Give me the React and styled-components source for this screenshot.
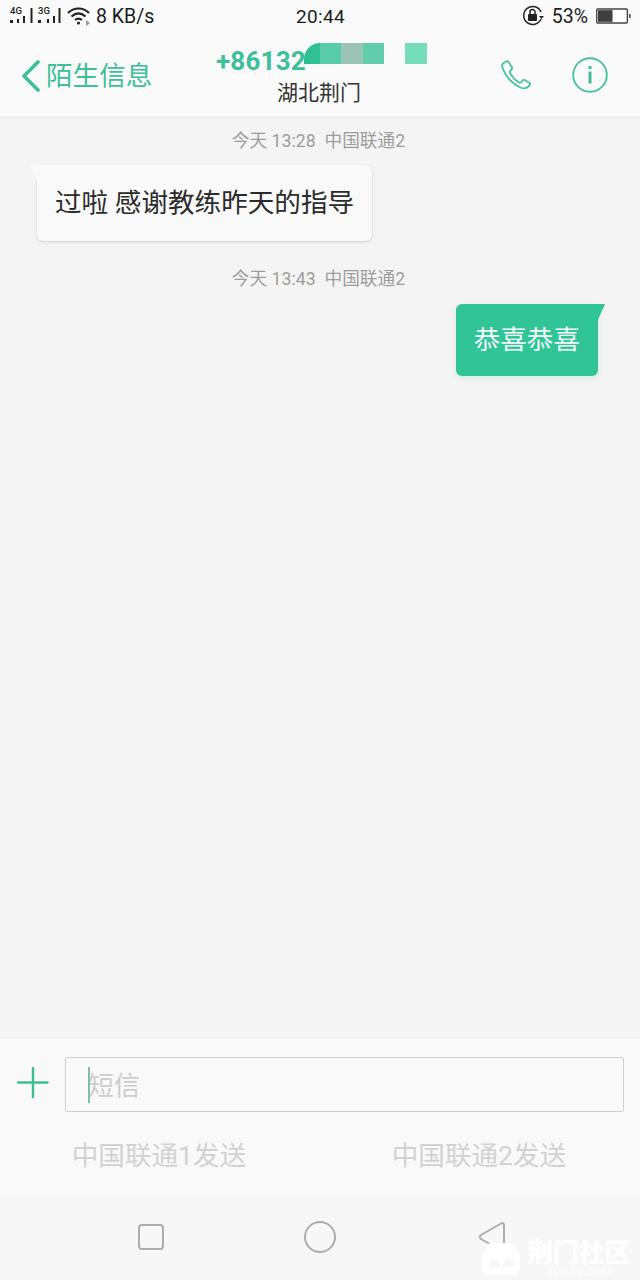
import React from "react";
import styled, { createGlobalStyle } from "styled-components";

const FONT = `Roboto, "Noto Sans CJK SC", "Noto Sans", sans-serif`;
const GREEN = "#30c496";
const INK_GREEN = "#3dbf98";

const Global = createGlobalStyle`
  html, body { margin: 0; padding: 0; }
  body { font-family: ${FONT}; background: #f4f4f4; }
  * { box-sizing: border-box; }
`;

const Page = styled.div`
  width: 640px;
  height: 1280px;
  display: flex;
  flex-direction: column;
  position: relative;
  overflow: hidden;
  background: #f4f4f4;
`;

const Header = styled.header`
  height: 118px;
  flex: none;
  background: #fafafa;
  border-bottom: 2px solid #efefef;
  display: flex;
  flex-direction: column;
`;

const StatusBar = styled.div`
  height: 32px;
  flex: none;
  padding: 0 9px 0 10px;
  display: grid;
  grid-template-columns: 1fr auto 1fr;
  align-items: center;
  color: #1c1c1c;
  font-size: 19.5px;
`;

const StatusLeft = styled.div`
  display: flex;
  align-items: center;
  gap: 5px;
`;

const WifiSlot = styled.span`
  display: flex;
  margin-left: 1px;
`;

const StatusRight = styled.div`
  display: flex;
  align-items: center;
  justify-content: flex-end;
  gap: 8px;
`;

const Clock = styled.div`
  font-size: 19px;
  letter-spacing: 0.3px;
`;

const TitleBar = styled.div`
  flex: 1;
  display: grid;
  grid-template-columns: 190px 1fr 190px;
  align-items: start;
`;

const Back = styled.div`
  display: flex;
  align-items: center;
  gap: 5px;
  padding: 27px 0 0 21px;
  color: ${INK_GREEN};
  font-size: 26.6px;
  line-height: 34px;
`;

const TitleBlock = styled.div`
  position: relative;
  display: flex;
  flex-direction: column;
  align-items: flex-start;
  padding: 12px 0 0 26px;
`;

const Phone = styled.div`
  color: ${INK_GREEN};
  font-size: 26px;
  font-weight: 700;
  line-height: 34px;
  letter-spacing: 0.2px;
`;

const Region = styled.div`
  color: #333;
  font-size: 21px;
  line-height: 28px;
  margin: 1px 0 0 61px;
  white-space: nowrap;
`;

const Mosaic = styled.div`
  position: absolute;
  top: 11px;
  left: 114px;
  display: flex;
  height: 21px;
`;

const Tile = styled.div`
  width: ${(p) => p.$w}px;
  background: ${(p) => p.$c};
  margin-left: ${(p) => p.$gap || 0}px;
  border-top-left-radius: ${(p) => p.$r || 0}px;
`;

const Actions = styled.div`
  display: flex;
  justify-content: flex-end;
  align-items: flex-start;
  gap: 41px;
  padding: 25px 32px 0 0;
`;

const PhoneSlot = styled.span`
  display: flex;
  padding-top: 3px;
`;

const Chat = styled.main`
  flex: 1;
  display: flex;
  flex-direction: column;
  padding-top: 12px;
`;

const Stamp = styled.div`
  color: #9d9d9d;
  font-size: 17.7px;
  line-height: 22px;
  text-align: center;
  padding-right: 3px;
  white-space: pre;
`;

const Row = styled.div`
  display: flex;
  justify-content: ${(p) => (p.$out ? "flex-end" : "flex-start")};
  padding: ${(p) => (p.$out ? "14px 42px 0 0" : "13px 0 0 37px")};
  margin-bottom: ${(p) => (p.$out ? 0 : "27px")};
`;

const Bubble = styled.div`
  position: relative;
  height: ${(p) => (p.$out ? "72px" : "76px")};
  padding: 0 18px ${(p) => (p.$out ? "5px" : "6px")};
  display: flex;
  align-items: center;
  font-size: 26.6px;
  border-radius: 6px;
  border-top-${(p) => (p.$out ? "right" : "left")}-radius: 0;
  color: ${(p) => (p.$out ? "#f4fffb" : "#2b2b2b")};
  background: ${(p) => (p.$out ? GREEN : "#f9f9f9")};
  box-shadow: ${(p) =>
    p.$out
      ? "0 3px 7px rgba(48,196,150,0.14)"
      : "0 1px 3px rgba(0,0,0,0.14), 0 0 1px rgba(0,0,0,0.08)"};

  &::before {
    content: "";
    position: absolute;
    top: 0;
    width: 8px;
    height: 18px;
    ${(p) => (p.$out ? "right: -7px;" : "left: -7px;")}
    background: ${(p) => (p.$out ? GREEN : "#f9f9f9")};
    clip-path: ${(p) =>
      p.$out
        ? "polygon(0 0, 100% 0, 0 100%)"
        : "polygon(0 0, 100% 0, 100% 100%)"};
  }
`;

const Composer = styled.section`
  height: 160px;
  flex: none;
  background: #f9f9f9;
  border-top: 1px solid #efefef;
  display: flex;
  flex-direction: column;
`;

const InputRow = styled.div`
  height: 74px;
  flex: none;
  display: flex;
  align-items: flex-start;
  gap: 16px;
  padding: 19px 16px 0 17px;
`;

const PlusSlot = styled.div`
  display: flex;
  padding-top: 10px;
`;

const Input = styled.div`
  flex: 1;
  height: 55px;
  border: 1px solid #cfcfcf;
  border-radius: 2px;
  display: flex;
  align-items: center;
  padding: 0 0 2px 22px;
  position: relative;
  color: #cdcdcd;
  font-size: 26px;
`;

const Caret = styled.span`
  position: absolute;
  left: 22px;
  top: 9px;
  width: 2px;
  height: 36px;
  background: #7fbfa8;
`;

const SendRow = styled.div`
  flex: 1;
  display: grid;
  grid-template-columns: 318px 322px;
`;

const SendButton = styled.div`
  display: flex;
  justify-content: center;
  padding-top: 22px;
  color: #d2d2d2;
  font-size: 26.6px;
  line-height: 44px;
`;

const NavBar = styled.nav`
  height: 83px;
  flex: none;
  background: #f7f7f7;
  display: flex;
  align-items: flex-start;
  padding: 23px 0 0 137px;
`;

const NavItem = styled.div`
  display: flex;
  height: 34px;
  align-items: center;
  margin-right: ${(p) => p.$after || 0}px;
`;

const Watermark = styled.div`
  position: absolute;
  left: 482px;
  top: 1241px;
  display: flex;
  align-items: flex-start;
  gap: 7px;
  color: #fff;
  pointer-events: none;
`;

const LogoSlot = styled.span`
  display: flex;
  padding-top: 2px;
`;

const MarkText = styled.div`
  display: flex;
  flex-direction: column;
  align-items: center;
`;

const MarkName = styled.div`
  font-size: 26px;
  line-height: 25px;
  font-weight: 900;
  letter-spacing: -0.2px;
`;

const MarkSite = styled.div`
  font-size: 11.5px;
  line-height: 12px;
  opacity: 0.8;
`;

const Signal = ({ label, dx }) => (
  <svg width="23" height="22" viewBox="0 0 23 22">
    <text x="0" y="9" fontSize="9.5" fontWeight="500" fill="#222" fontFamily="Roboto, sans-serif">
      {label}
    </text>
    <rect x="0" y="15" width="3" height="3" fill="#222" />
    <rect x={dx} y="14" width="2" height="4" fill="#222" />
    <rect x={dx + 6} y="11" width="2" height="7" fill="#222" />
    <rect x="20.5" y="3" width="2" height="15" fill="#222" />
  </svg>
);

const Wifi = () => (
  <svg width="24" height="20" viewBox="0 0 24 20" fill="none" stroke="#222" strokeWidth="2.2">
    <path d="M1 7 C7 1 16 1 22 7" />
    <path d="M4.5 10.5 C9 6.5 14 6.5 18.5 10.5" />
    <path d="M8 14 C10.5 12 12.5 12 15 14" />
    <circle cx="11.5" cy="17" r="1.6" fill="#222" stroke="none" />
    <path d="M19 14 L23 17 L19 20 Z" fill="#999" stroke="none" />
  </svg>
);

const Lock = () => (
  <svg width="22" height="22" viewBox="0 0 22 22" fill="none">
    <path d="M19 14 A9 9 0 1 1 19 7" stroke="#222" strokeWidth="1.5" />
    <path d="M17 11 h5 l-2.5 3 Z" fill="#222" />
    <rect x="6" y="9" width="9" height="7" rx="1" fill="#222" />
    <path d="M8 9 V7 a2.5 2.5 0 0 1 5 0 V9" stroke="#222" strokeWidth="1.5" />
  </svg>
);

const Battery = () => (
  <svg width="35" height="16" viewBox="0 0 36 16">
    <rect x="0.75" y="0.75" width="31.5" height="14.5" rx="1" fill="#fff" stroke="#444" strokeWidth="1.4" />
    <rect x="2" y="2" width="15" height="12" fill="#3f3f3f" />
    <rect x="34" y="6" width="1.6" height="4" fill="#444" />
  </svg>
);

const Chevron = () => (
  <svg width="20" height="32" viewBox="0 0 20 32" fill="none" stroke={INK_GREEN} strokeWidth="3.6" strokeLinecap="round" strokeLinejoin="round">
    <path d="M17 2 L3 16 L17 30" />
  </svg>
);

const PhoneIcon = () => (
  <svg width="30" height="30" viewBox="0 0 32 32" fill="none" stroke="#4cc3a0" strokeWidth="2" strokeLinejoin="round">
    <path d="M5.5 1.6 L2.2 3.8 C0.8 5 1.1 7.6 2.2 10 C5.6 18.2 12 25.4 21.4 29.6 C25 31 27.6 30.2 29.6 28 L30.8 26.2 C31.2 25.4 30.8 24.6 30 24.2 L25.2 21.4 C24.4 21 23.6 21.2 23 21.8 L21.2 23.8 C20.6 24.4 19.6 24.4 18.8 23.8 C14.8 21.2 11.6 17.6 9.6 13.8 C9.2 13 9.4 12.2 10 11.6 L11.4 10 C12 9.4 12 8.6 11.6 7.8 L8 2 C7.4 1.2 6.4 1 5.5 1.6 Z" />
  </svg>
);

const InfoIcon = () => (
  <svg width="36" height="36" viewBox="0 0 36 36" fill="none">
    <circle cx="18" cy="18" r="16.8" stroke="#4cc3a0" strokeWidth="1.9" />
    <rect x="16.5" y="14.5" width="3" height="12" fill={INK_GREEN} />
    <rect x="16.5" y="9" width="3" height="3" fill={INK_GREEN} />
  </svg>
);

const Plus = () => (
  <svg width="32" height="32" viewBox="0 0 32 32" stroke="#3dbd95" strokeWidth="2.4" strokeLinecap="round">
    <path d="M1 15.5 H30.5 M16 1 V30" />
  </svg>
);

const NavSquare = () => (
  <svg width="28" height="28" viewBox="0 0 28 28" fill="none" stroke="#adadad" strokeWidth="2">
    <rect x="2" y="2" width="24" height="24" rx="3" />
  </svg>
);

const NavCircle = () => (
  <svg width="32" height="32" viewBox="0 0 32 32" fill="none" stroke="#adadad" strokeWidth="2">
    <circle cx="16" cy="16" r="15" />
  </svg>
);

const NavBack = () => (
  <svg width="28" height="32" viewBox="0 0 28 32" fill="none" stroke="#adadad" strokeWidth="2" strokeLinejoin="round">
    <path d="M3 14 L23 2.5 C25 1.5 26 2.5 26 4 V28 C26 30 25 30.5 23 29.5 L3 18 C1.5 17 1.5 15 3 14 Z" />
  </svg>
);

const MarkLogo = () => (
  <svg width="38" height="32" viewBox="0 0 38 32">
    <path
      fillRule="evenodd"
      fill="#fff"
      d="M9 0 H29 C31 0 32 1 33 3 L35 8 C37 9 38 11 38 13 V25 C38 29 35 32 31 32 H7 C3 32 0 29 0 25 V13 C0 11 1 9 3 8 L5 3 C6 1 7 0 9 0 Z M7 24 C7 19 9 16 12.5 16 C16 16 18 19 18 24 Z M21 24 C21 19 23 16 26.5 16 C30 16 32 19 32 24 Z"
    />
  </svg>
);

export default function App() {
  return (
    <Page>
      <Global />
      <Header>
        <StatusBar>
          <StatusLeft>
            <Signal label="4G" dx={7} />
            <Signal label="3G" dx={9} />
            <WifiSlot>
              <Wifi />
            </WifiSlot>
            <span>8 KB/s</span>
          </StatusLeft>
          <Clock>20:44</Clock>
          <StatusRight>
            <Lock />
            <span>53%</span>
            <Battery />
          </StatusRight>
        </StatusBar>
        <TitleBar>
          <Back>
            <Chevron />
            <span>陌生信息</span>
          </Back>
          <TitleBlock>
            <Phone>+86132</Phone>
            <Region>湖北荆门</Region>
            <Mosaic>
              <Tile $w={16} $c="#2fc093" $r={16} />
              <Tile $w={21} $c="#58cba8" />
              <Tile $w={22} $c="#9cc4b6" />
              <Tile $w={21} $c="#62cdab" />
              <Tile $w={22} $c="#76dcba" $gap={21} />
            </Mosaic>
          </TitleBlock>
          <Actions>
            <PhoneSlot>
              <PhoneIcon />
            </PhoneSlot>
            <InfoIcon />
          </Actions>
        </TitleBar>
      </Header>

      <Chat>
        <Stamp>今天 13:28  中国联通2</Stamp>
        <Row>
          <Bubble>过啦 感谢教练昨天的指导</Bubble>
        </Row>
        <Stamp>今天 13:43  中国联通2</Stamp>
        <Row $out>
          <Bubble $out>恭喜恭喜</Bubble>
        </Row>
      </Chat>

      <Composer>
        <InputRow>
          <PlusSlot>
            <Plus />
          </PlusSlot>
          <Input>
            <Caret />
            短信
          </Input>
        </InputRow>
        <SendRow>
          <SendButton>中国联通1发送</SendButton>
          <SendButton>中国联通2发送</SendButton>
        </SendRow>
      </Composer>

      <NavBar>
        <NavItem $after={139}>
          <NavSquare />
        </NavItem>
        <NavItem $after={142}>
          <NavCircle />
        </NavItem>
        <NavItem>
          <NavBack />
        </NavItem>
      </NavBar>

      <Watermark>
        <LogoSlot>
          <MarkLogo />
        </LogoSlot>
        <MarkText>
          <MarkName>荆门社区</MarkName>
          <MarkSite>JMBBS.COM</MarkSite>
        </MarkText>
      </Watermark>
    </Page>
  );
}
